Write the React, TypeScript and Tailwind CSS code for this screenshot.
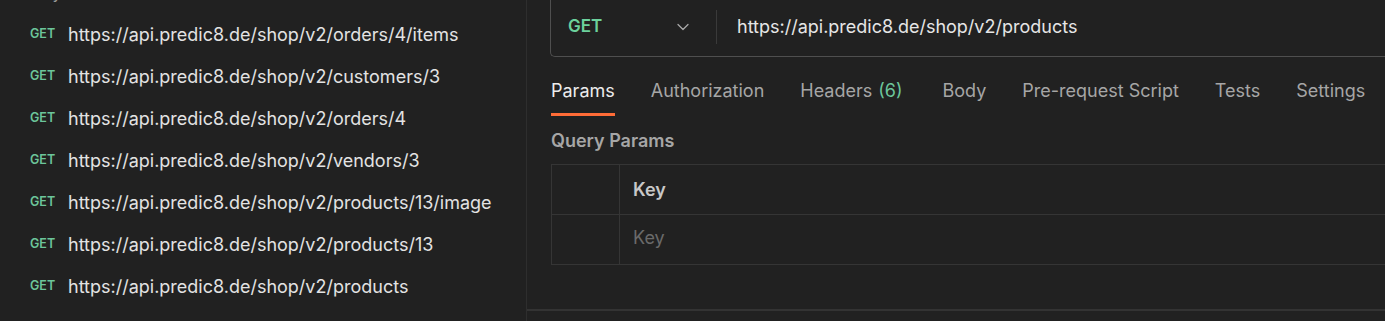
import { ChevronDown } from 'lucide-react'

type HistoryItem = {
    method: string
    url: string
}

const history: HistoryItem[] = [
    { method: "GET", url: "https://api.predic8.de/shop/v2/orders/4/items" },
    { method: "GET", url: "https://api.predic8.de/shop/v2/customers/3" },
    { method: "GET", url: "https://api.predic8.de/shop/v2/orders/4" },
    { method: "GET", url: "https://api.predic8.de/shop/v2/vendors/3" },
    { method: "GET", url: "https://api.predic8.de/shop/v2/products/13/image" },
    { method: "GET", url: "https://api.predic8.de/shop/v2/products/13" },
    { method: "GET", url: "https://api.predic8.de/shop/v2/products" },
]

const tabs = ["Params", "Authorization", "Headers", "Body", "Pre-request Script", "Tests", "Settings"]

const App: React.FC = () => {
    return (
        <div className="flex h-[321px] w-[1385px] overflow-hidden bg-[#212121] font-['Inter',sans-serif]">
            {/* sidebar history */}
            <aside className="flex w-[527px] shrink-0 flex-col border-r border-[#2e2e2e]">
                <div className="-mt-[19px] mb-[6px] h-[26px] pl-[22px] text-[13px] leading-[26px] font-semibold text-[#9a9a9a]">
                    Today
                </div>
                {history.map((item) => (
                    <div key={item.url} className="flex h-[42px] items-center pl-[30px]">
                        <span className="w-[38px] text-[12.5px] font-semibold text-[#6cc59a]">{item.method}</span>
                        <span className="text-[18px] text-[#e3e3e3]">{item.url}</span>
                    </div>
                ))}
            </aside>

            {/* request panel */}
            <main className="flex min-w-0 flex-1 flex-col">
                <div className="flex flex-1 flex-col pl-[23px]">
                    <div className="-mt-[7px] flex h-[64px] items-center rounded-l-[5px] border border-r-0 border-[#4f4f4f] pt-[3px]">
                        <span className="ml-[17px] w-[105px] text-[17px] font-semibold text-[#6cd19c]">GET</span>
                        <ChevronDown className="h-[20px] w-[20px] text-[#a8a8a8]" strokeWidth={1.5} />
                        <div className="ml-[23px] h-[34px] w-px bg-[#3a3a3a]" />
                        <span className="ml-[20px] text-[18px] text-[#e6e6e6]">https://api.predic8.de/shop/v2/products</span>
                    </div>

                    <div className="mt-[17px] flex gap-[36px] pl-px">
                        {tabs.map((tab) => (
                            <div key={tab} className="flex flex-col">
                                <span
                                    className={
                                        tab === "Params"
                                            ? "h-[42px] text-[18px] leading-[34px] text-[#ececec] border-b-[3px] border-[#ff6c37]"
                                            : "h-[42px] text-[18px] leading-[34px] text-[#a6a6a6]"
                                    }
                                >
                                    {tab}
                                    {tab === "Headers" && <span className="ml-[6px] mr-[4px] text-[#6cc59a]">(6)</span>}
                                </span>
                            </div>
                        ))}
                    </div>

                    <div className="mt-[11px] pl-px text-[18px] font-semibold text-[#a6a6a6]">Query Params</div>

                    <div className="mt-[10px] ml-px border-y border-l border-[#353535]">
                        <div className="flex h-[50px] border-b border-[#353535]">
                            <div className="w-[68px] border-r border-[#353535]" />
                            <div className="flex items-center pl-[13px] text-[18px] font-semibold text-[#c8c8c8]">Key</div>
                        </div>
                        <div className="flex h-[49px]">
                            <div className="w-[68px] border-r border-[#353535]" />
                            <div className="flex items-center pb-[5px] pl-[13px] text-[18px] text-[#6a6a6a]">Key</div>
                        </div>
                    </div>
                </div>
                <div className="h-[12px] border-t-2 border-[#333333]" />
            </main>
        </div>
    )
}

export default App
